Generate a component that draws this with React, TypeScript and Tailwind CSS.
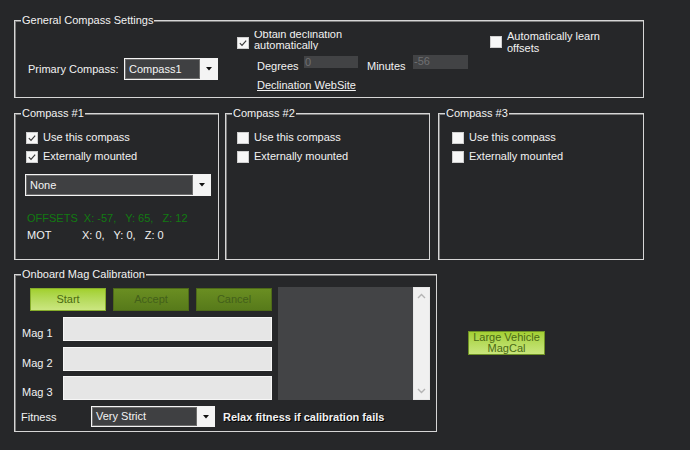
import React from "react";

const font = { fontFamily: '"Liberation Sans", Arial, sans-serif' };

function Group({ title, className, children }: { title: string; className: string; children?: React.ReactNode }) {
  return (
    <div className={`relative box-border border border-[#d6d6d6] shadow-[inset_1px_1px_0_#7c7c7c] ${className}`}>
      <span className="absolute left-[6px] top-[-8px] bg-[#262729] px-[1px] text-[11px] leading-[14px] text-[#f2f2f2]">
        {title}
      </span>
      {children}
    </div>
  );
}

function CheckBox({ checked }: { checked?: boolean }) {
  return (
    <span className="box-border flex h-[12px] w-[12px] shrink-0 items-center justify-center border border-[#cfcfcf] bg-[#f7f7f7]">
      {checked && (
        <svg viewBox="0 0 12 12" className="h-[12px] w-[12px]">
          <path d="M2.2 6.2 L4.8 8.8 L9.8 3.2" fill="none" stroke="#3a3a3a" strokeWidth={1.4} />
        </svg>
      )}
    </span>
  );
}

function Combo({ value, className }: { value: string; className: string }) {
  return (
    <div className={`box-border flex border border-[#f4f4f4] bg-[#f4f4f4] ${className}`}>
      <div className="flex flex-1 items-center border border-[#6c6c6c] bg-[#3f4042] pl-[3px] text-[11px] text-[#f4f4f4]">
        {value}
      </div>
      <div className="flex w-[17px] items-center justify-center">
        <svg viewBox="0 0 6 4" className="h-[4px] w-[6px]">
          <path d="M0 0 H6 L3 3.5 Z" fill="#111" />
        </svg>
      </div>
    </div>
  );
}

function CheckRow({ label, checked, className }: { label: string; checked?: boolean; className: string }) {
  return (
    <div className={`flex items-start ${className}`}>
      <CheckBox checked={checked} />
      <span className="ml-[5px] mt-[-1px] text-[11px] leading-[13px] text-[#f2f2f2]">{label}</span>
    </div>
  );
}

function CompassGroup({ title, className, pad, checked, children }: { title: string; className: string; pad: string; checked?: boolean; children?: React.ReactNode }) {
  return (
    <Group title={title} className={`h-[147px] ${className}`}>
      <div className={`flex flex-col ${pad}`}>
        <CheckRow label="Use this compass" checked={checked} className="mt-[18px]" />
        <CheckRow label="Externally mounted" checked={checked} className="mt-[7px]" />
        {children}
      </div>
    </Group>
  );
}

function GreenButton({ label, dim }: { label: string; dim?: boolean }) {
  return (
    <div
      className={
        dim
          ? "box-border flex h-[23px] w-[76px] items-center justify-center border border-[#4e6a18] bg-gradient-to-b from-[#6a8e22] to-[#577a1a] text-[11px] text-[#43601a]"
          : "box-border flex h-[23px] w-[76px] items-center justify-center border border-[#86ad2a] bg-gradient-to-b from-[#a2d02c] to-[#cbe680] text-[11px] text-[#4b6a12]"
      }
    >
      {label}
    </div>
  );
}

function MagRow({ label, className }: { label: string; className: string }) {
  return (
    <div className={`flex items-end ${className}`}>
      <span className="w-[48px] pb-[1px] pl-[7px] text-[11px] leading-[14px] text-[#f2f2f2]">{label}</span>
      <div className="box-border h-[24px] w-[209px] border border-[#f6f6f6] bg-[#e6e6e6]" />
    </div>
  );
}

export default function App() {
  return (
    <div className="h-[450px] w-[690px] overflow-hidden bg-[#262729] pl-[14px] pt-[20px]" style={font}>
      <Group title="General Compass Settings" className="h-[78px] w-[630px]">
        <div className="flex items-start">
          <div className="ml-[13px] mt-[37px] flex items-center">
            <span className="w-[96px] text-[11px] leading-[14px] text-[#f2f2f2]">Primary Compass:</span>
            <Combo value="Compass1" className="h-[22px] w-[94px]" />
          </div>
          <div className="ml-[19px] mt-[9px] flex w-[253px] flex-col">
            <div className="flex h-[20px] items-start">
              <span className="mt-[7px]">
                <CheckBox checked />
              </span>
              <div className="ml-[5px] mt-[1px] h-[19px] overflow-hidden">
                <div className="mt-[-2px] text-[11px] leading-[11px] text-[#f2f2f2]">
                  Obtain declination
                  <br />
                  automatically
                </div>
              </div>
            </div>
            <div className="mt-[4px] flex items-start pl-[20px] text-[11px]">
              <span className="mt-[5px] w-[47px] leading-[14px] text-[#f2f2f2]">Degrees</span>
              <div className="mt-[2px] h-[12px] w-[54px] bg-[#424345] pl-[1px] leading-[12px] text-[#6f7072]">0</div>
              <span className="ml-[9px] mt-[5px] w-[46px] leading-[14px] text-[#f2f2f2]">Minutes</span>
              <div className="mt-[1px] h-[14px] w-[55px] bg-[#424345] pl-[1px] leading-[13px] text-[#6f7072]">-56</div>
            </div>
            <span className="ml-[20px] mt-[5px] text-[11px] leading-[14px] text-[#f2f2f2] underline">Declination WebSite</span>
          </div>
          <div className="flex items-start">
            <span className="mt-[15px]">
              <CheckBox />
            </span>
            <div className="ml-[5px] mt-[9px] text-[11px] leading-[12px] text-[#f2f2f2]">
              Automatically learn
              <br />
              offsets
            </div>
          </div>
        </div>
      </Group>

      <div className="mt-[15px] flex">
        <CompassGroup title="Compass #1" className="w-[205px]" pad="pl-[11px]" checked>
          <Combo value="None" className="ml-[-1px] mt-[11px] h-[22px] w-[186px]" />
          <div className="mt-[15px] whitespace-pre pl-[1px] text-[11px] leading-[14px] text-[#127a12]">
            {"OFFSETS  X: -57,   Y: 65,   Z: 12"}
          </div>
          <div className="mt-[3px] whitespace-pre pl-[1px] text-[11px] leading-[14px] text-[#f2f2f2]">
            <span className="inline-block w-[55px]">MOT</span>
            {"X: 0,   Y: 0,   Z: 0"}
          </div>
        </CompassGroup>
        <CompassGroup title="Compass #2" className="ml-[6px] w-[205px]" pad="pl-[11px]" />
        <CompassGroup title="Compass #3" className="ml-[8px] w-[206px]" pad="pl-[13px]" />
      </div>

      <div className="mt-[14px] flex items-start">
        <Group title="Onboard Mag Calibration" className="h-[158px] w-[423px]">
          <div className="flex items-start">
            <div className="flex w-[257px] flex-col">
              <div className="mt-[13px] flex gap-[7px] pl-[15px]">
                <GreenButton label="Start" />
                <GreenButton label="Accept" dim />
                <GreenButton label="Cancel" dim />
              </div>
              <MagRow label="Mag 1" className="mt-[6px]" />
              <MagRow label="Mag 2" className="mt-[6px]" />
              <MagRow label="Mag 3" className="mt-[5px]" />
            </div>
            <div className="ml-[6px] mt-[12px] flex h-[113px]">
              <div className="w-[135px] bg-[#434446]" />
              <div className="box-border flex w-[17px] flex-col items-center justify-between border border-[#e8e8e8] bg-[#f0f0f0] py-[5px]">
                <svg viewBox="0 0 9 6" className="h-[6px] w-[9px]">
                  <path d="M1 5 L4.5 1.5 L8 5" fill="none" stroke="#b4b4b4" strokeWidth={1.4} />
                </svg>
                <svg viewBox="0 0 9 6" className="h-[6px] w-[9px]">
                  <path d="M1 1 L4.5 4.5 L8 1" fill="none" stroke="#b4b4b4" strokeWidth={1.4} />
                </svg>
              </div>
            </div>
          </div>
          <div className="mt-[6px] flex items-center pl-[6px] text-[11px] text-[#f2f2f2]">
            <span className="w-[70px] leading-[14px]">Fitness</span>
            <Combo value="Very Strict" className="h-[21px] w-[124px]" />
            <span className="ml-[8px] font-bold leading-[14px] [text-shadow:1px_1px_0_#000]">Relax fitness if calibration fails</span>
          </div>
        </Group>
        <div className="ml-[31px] mt-[57px] box-border flex h-[24px] w-[77px] flex-col items-center justify-center border border-[#6f9226] bg-gradient-to-b from-[#a4d032] to-[#c9e67c] text-[11px] leading-[11px] text-[#4a6a14]">
          <span>Large Vehicle</span>
          <span>MagCal</span>
        </div>
      </div>
    </div>
  );
}
